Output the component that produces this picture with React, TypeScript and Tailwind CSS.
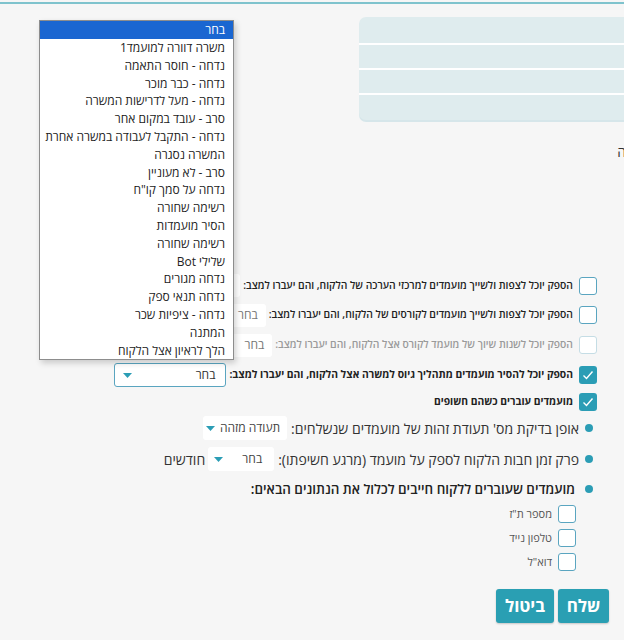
import React from 'react';

const statusOptions = [
  'משרה דוורה למועמד1',
  'נדחה - חוסר התאמה',
  'נדחה - כבר מוכר',
  'נדחה - מעל לדרישות המשרה',
  'סרב - עובד במקום אחר',
  'נדחה - התקבל לעבודה במשרה אחרת',
  'המשרה נסגרה',
  'סרב - לא מעוניין',
  'נדחה על סמך קו"ח',
  'רשימה שחורה',
  'הסיר מועמדות',
  'רשימה שחורה',
  'שלילי Bot',
  'נדחה מגורים',
  'נדחה תנאי ספק',
  'נדחה - ציפיות שכר',
  'המתנה',
  'הלך לראיון אצל הלקוח',
];

function Caret() {
  return (
    <svg width="9" height="5" viewBox="0 0 9 5" className="shrink-0">
      <path d="M0 0 H9 L4.5 5 Z" fill="#2b9db5" />
    </svg>
  );
}

function Checkbox({ checked, disabled }: { checked?: boolean; disabled?: boolean }) {
  if (checked) {
    return (
      <div className="w-[18px] h-[18px] rounded-[3px] bg-[#2b9db5] flex items-center justify-center shrink-0">
        <svg width="12" height="10" viewBox="0 0 12 10">
          <path d="M1.5 5.5 L4.5 8.5 L10.5 1.5" fill="none" stroke="white" strokeWidth="1.4" />
        </svg>
      </div>
    );
  }
  return (
    <div
      className={`w-[18px] h-[18px] rounded-[3px] bg-white shrink-0 border-[1.5px] ${
        disabled ? 'border-[#c5dde5]' : 'border-[#5aa5c0]'
      }`}
    />
  );
}

function SoftSelect({ w, label = 'בחר' }: { w: string; label?: string }) {
  return (
    <div className={`${w} h-[23px] bg-white rounded-[3px] flex items-center px-[8px] text-[12px] text-[#777] shrink-0`}>
      {label}
    </div>
  );
}

function CheckRow({
  text,
  checked,
  disabled,
  bold,
  className,
  children,
}: {
  text: string;
  checked?: boolean;
  disabled?: boolean;
  bold?: boolean;
  className: string;
  children?: React.ReactNode;
}) {
  return (
    <div className={`flex items-center pr-[27px] ${className}`}>
      <Checkbox checked={checked} disabled={disabled} />
      <span
        className={`mr-[6px] ml-[3px] text-[10.3px] whitespace-nowrap ${
          disabled ? 'text-[#9a9a9a]' : 'text-[#222]'
        } ${bold ? 'font-bold' : 'font-semibold'}`}
      >
        {text}
      </span>
      {children}
    </div>
  );
}

function Bullet() {
  return <span className="w-[8px] h-[8px] rounded-full bg-[#2b9db5] shrink-0" />;
}

export default function App() {
  return (
    <div
      dir="rtl"
      className="relative w-[624px] h-[640px] overflow-hidden bg-[#f6f6f6] text-[#333]"
      style={{ fontFamily: '"Open Sans", "Liberation Sans", "DejaVu Sans", sans-serif' }}
    >
      <div className="mt-[2px] h-[2px] bg-[#7fc3cd]" />

      {/* info panel */}
      <div className="mt-[13px] mr-[-40px] w-[305px] rounded-l-[7px] bg-[#dfecee] shadow-[0_2px_0_#d6e6ea] overflow-hidden">
        <div className="h-[28px] border-b-2 border-white" />
        <div className="h-[25px] border-b-2 border-white" />
        <div className="h-[25px] border-b-2 border-white" />
        <div className="h-[25px]" />
      </div>

      <div className="mt-[22px] mr-[-2px] text-[14px] text-[#333] h-[20px] leading-[20px]">ה</div>

      {/* permissions */}
      <div className="mt-[109px] flex flex-col">
        <CheckRow className="h-[29px]" text="הספק יוכל לצפות ולשייך מועמדים למרכזי הערכה של הלקוח, והם יעברו למצב:">
          <SoftSelect w="w-[44px]" />
        </CheckRow>
        <CheckRow className="h-[30px]" text="הספק יוכל לצפות ולשייך מועמדים לקורסים של הלקוח, והם יעברו למצב:">
          <SoftSelect w="w-[42px]" />
        </CheckRow>
        <CheckRow className="h-[30px]" disabled text="הספק יוכל לשנות שיוך של מועמד לקורס אצל הלקוח, והם יעברו למצב:">
          <SoftSelect w="w-[42px]" />
        </CheckRow>
        <CheckRow className="h-[30px]" checked bold text="הספק יוכל להסיר מועמדים מתהליך גיוס למשרה אצל הלקוח, והם יעברו למצב:">
          <div className="w-[112px] h-[24px] bg-white border border-[#5aa5c0] rounded-[3px] flex items-center justify-between px-[8px] text-[12px] text-[#333] shrink-0">
            <span className="mr-[2px]">בחר</span>
            <Caret />
          </div>
        </CheckRow>
        <CheckRow className="h-[24px]" checked bold text="מועמדים עוברים כשהם חשופים" />

        <div className="h-[28px] flex items-center pr-[31px] text-[14px] text-[#333]">
          <Bullet />
          <span className="mr-[6px] ml-[4px] whitespace-nowrap">אופן בדיקת מס' תעודת זהות של מועמדים שנשלחים:</span>
          <div className="w-[84px] h-[24px] bg-white rounded-[3px] flex items-center justify-between pr-[7px] pl-[3px] text-[12px] text-[#444]">
            <span>תעודה מזהה</span>
            <Caret />
          </div>
        </div>

        <div className="h-[34px] flex items-center pr-[31px] text-[14px] text-[#333]">
          <Bullet />
          <span className="mr-[6px] ml-[4px] whitespace-nowrap">פרק זמן חבות הלקוח לספק על מועמד (מרגע חשיפתו):</span>
          <div className="w-[66px] h-[24px] bg-white rounded-[3px] flex items-center justify-between pr-[12px] pl-[6px] text-[12px] text-[#444]">
            <span>בחר</span>
            <Caret />
          </div>
          <span className="mr-[3px] whitespace-nowrap">חודשים</span>
        </div>

        <div className="h-[26px] flex items-center pr-[31px] text-[13.4px] text-[#222]">
          <Bullet />
          <span className="mr-[10px] font-semibold whitespace-nowrap">מועמדים שעוברים ללקוח חייבים לכלול את הנתונים הבאים:</span>
        </div>

        {['מספר ת"ז', 'טלפון נייד', 'דוא"ל'].map((label) => (
          <div key={label} className="h-[24px] flex items-center pr-[48px]">
            <Checkbox />
            <span className="mr-[6px] text-[11px] text-[#555]">{label}</span>
          </div>
        ))}

        <div className="mt-[15px] pr-[15px] flex gap-[4px]">
          <button className="w-[51px] h-[34px] bg-[#2a9fb3] text-white font-bold text-[17px] rounded-[3px] shadow-[0_1px_2px_rgba(0,0,0,0.2)]">
            שלח
          </button>
          <button className="w-[58px] h-[34px] bg-[#2a9fb3] text-white font-bold text-[17px] rounded-[3px] shadow-[0_1px_2px_rgba(0,0,0,0.2)]">
            ביטול
          </button>
        </div>
      </div>

      {/* open status menu */}
      <div className="absolute left-[39px] top-[20px] w-[195px] bg-white border border-[#8d8d8d] shadow-[2px_3px_6px_rgba(0,0,0,0.18)] text-[12px] text-[#222]">
        <div className="h-[18px] leading-[18px] bg-[#1a66d1] text-white pr-[8px]">בחר</div>
        {statusOptions.map((opt, i) => (
          <div key={i} className="h-[17.8px] leading-[17.8px] pr-[8px] whitespace-nowrap">
            {opt}
          </div>
        ))}
      </div>
    </div>
  );
}
